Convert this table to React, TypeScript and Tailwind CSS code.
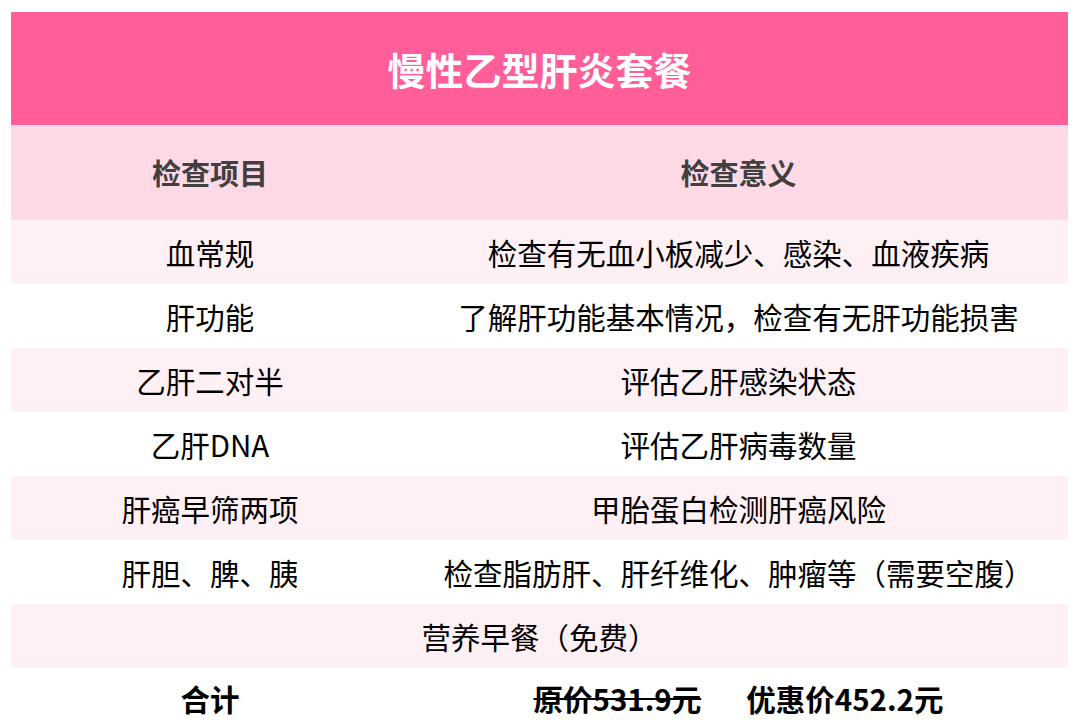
import React from "react";

const rows: [string, string][] = [
  ["血常规", "检查有无血小板减少、感染、血液疾病"],
  ["肝功能", "了解肝功能基本情况，检查有无肝功能损害"],
  ["乙肝二对半", "评估乙肝感染状态"],
  ["乙肝DNA", "评估乙肝病毒数量"],
  ["肝癌早筛两项", "甲胎蛋白检测肝癌风险"],
  ["肝胆、脾、胰", "检查脂肪肝、肝纤维化、肿瘤等（需要空腹）"],
];

export default function App() {
  return (
    <div
      className="w-[1080px] h-[723px] overflow-hidden bg-white pl-[11px] pt-[12px]"
      style={{ fontFamily: '"Noto Sans CJK SC", "Noto Sans", sans-serif' }}
    >
      <div className="w-[1057px]">
        <div className="h-[113px] bg-[#ff5e99] flex items-center justify-center text-white text-[38px] font-bold">
          慢性乙型肝炎套餐
        </div>
        <div className="h-[95px] bg-[#ffd9e6] grid grid-cols-[398px_1fr] items-center text-[#404040] text-[29px] font-bold">
          <div className="text-center">检查项目</div>
          <div className="text-center">检查意义</div>
        </div>
        {rows.map(([a, b], i) => (
          <div
            key={a}
            className={
              "h-[64px] grid grid-cols-[398px_1fr] items-center text-black text-[29.5px] " +
              (i % 2 === 0 ? "bg-[#fff0f6]" : "bg-white")
            }
          >
            <div className="text-center">{a}</div>
            <div className="text-center">{b}</div>
          </div>
        ))}
        <div className="h-[64px] bg-[#fff0f6] flex items-center justify-center text-black text-[29.5px]">
          营养早餐（免费）
        </div>
        <div className="h-[60px] grid grid-cols-[398px_1fr] items-center text-black text-[29.5px] font-bold">
          <div className="text-center">合计</div>
          <div className="flex justify-center gap-[45px]">
            <span className="line-through">原价531.9元</span>
            <span>优惠价452.2元</span>
          </div>
        </div>
      </div>
    </div>
  );
}
